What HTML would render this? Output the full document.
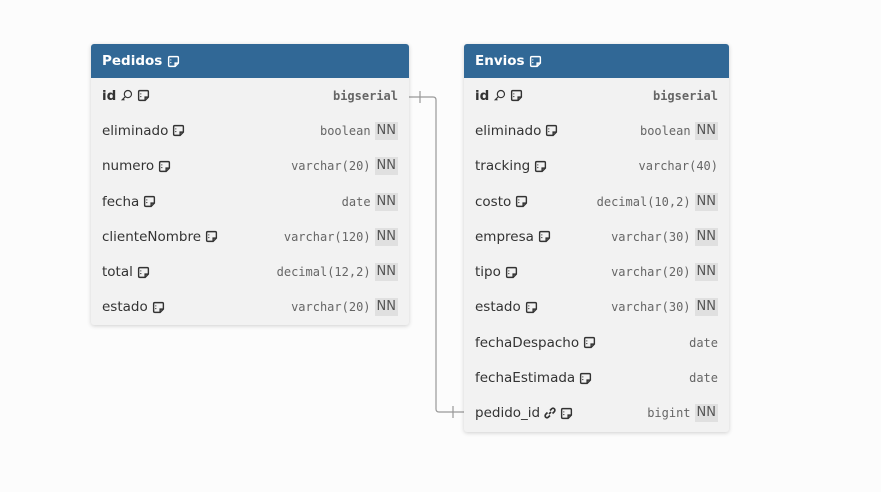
<!DOCTYPE html>
<html><head><meta charset="utf-8"><style>
*{margin:0;padding:0;box-sizing:border-box}
body{width:881px;height:492px;background:#fcfcfc;position:relative;overflow:hidden;font-family:"DejaVu Sans","Liberation Sans",sans-serif}
.card{position:absolute;background:#f2f2f2;border-radius:3px;box-shadow:0 1px 4px rgba(0,0,0,.18);overflow:hidden}
.hd{height:34px;background:#316896;color:#fff;font-weight:bold;font-size:13.5px;display:flex;align-items:center;padding-left:11px}
.row{height:35.3px;display:flex;align-items:center;padding:0 11px;font-size:13.5px;color:#333}
.nm{display:flex;align-items:center;gap:4px}
.ty{margin-left:auto;font-family:"DejaVu Sans Mono","Liberation Mono",monospace;font-size:12px;color:#666}
.nn{margin-left:4px;background:#e0e0e0;color:#555;font-size:13px;padding:0 2px;height:18px;line-height:18px}
b{font-weight:bold}
svg{display:block}
</style></head><body>
<svg width="881" height="492" style="position:absolute;left:0;top:0">
<path d="M409 97 H433 Q436 97 436 100 V409 Q436 412 439 412 H464" fill="none" stroke="#999" stroke-width="1.2"/>
<path d="M420 91 V103 M453 406 V418" stroke="#999" stroke-width="1.2"/>
</svg>
<svg width="0" height="0" style="position:absolute"><defs>
<symbol id="n" viewBox="0 0 12 12"><path d="M2.5 1.5 H9.5 Q10.5 1.5 10.5 2.5 V7.5 L7.5 10.5 H2.5 Q1.5 10.5 1.5 9.5 V2.5 Q1.5 1.5 2.5 1.5 Z M10.5 7.5 H7.5 V10.5" fill="none" stroke="#333" stroke-width="1.3"/><path d="M3.5 4v1M3.5 6.5v1" stroke="#333" stroke-width="1"/></symbol>
<symbol id="w" viewBox="0 0 12 12"><path d="M2.5 1.5 H9.5 Q10.5 1.5 10.5 2.5 V7.5 L7.5 10.5 H2.5 Q1.5 10.5 1.5 9.5 V2.5 Q1.5 1.5 2.5 1.5 Z M10.5 7.5 H7.5 V10.5" fill="none" stroke="#fff" stroke-width="1.3"/><path d="M3.5 4v1M3.5 6.5v1" stroke="#fff" stroke-width="1"/></symbol>
<symbol id="k" viewBox="0 0 12 12"><circle cx="7.3" cy="4.7" r="3.3" fill="none" stroke="#333" stroke-width="1.1"/><path d="M5 7 L1.5 10.5 M2.8 9.2 L4 10.4" fill="none" stroke="#333" stroke-width="1.1"/></symbol>
<symbol id="l" viewBox="0 0 12 12"><path d="M5 7 L7 5 M6 3.5 L7.5 2 Q9 0.5 10.5 2 Q11.5 3.5 10 5 L8.5 6.5 M6 8.5 L4.5 10 Q3 11.5 1.5 10 Q0.5 8.5 2 7 L3.5 5.5" fill="none" stroke="#333" stroke-width="1.6"/></symbol>
</defs></svg>

<div class="card" style="left:91px;top:44px;width:318px;height:281px">
<div class="hd">Pedidos&nbsp;<svg width="13" height="13"><use href="#w"/></svg></div>
<div class="row"><span class="nm"><b>id</b><svg width="13" height="13"><use href="#k"/></svg><svg width="13" height="13"><use href="#n"/></svg></span><span class="ty" style="font-weight:bold">bigserial</span></div>
<div class="row"><span class="nm">eliminado<svg width="13" height="13"><use href="#n"/></svg></span><span class="ty">boolean</span><span class="nn">NN</span></div>
<div class="row"><span class="nm">numero<svg width="13" height="13"><use href="#n"/></svg></span><span class="ty">varchar(20)</span><span class="nn">NN</span></div>
<div class="row"><span class="nm">fecha<svg width="13" height="13"><use href="#n"/></svg></span><span class="ty">date</span><span class="nn">NN</span></div>
<div class="row"><span class="nm">clienteNombre<svg width="13" height="13"><use href="#n"/></svg></span><span class="ty">varchar(120)</span><span class="nn">NN</span></div>
<div class="row"><span class="nm">total<svg width="13" height="13"><use href="#n"/></svg></span><span class="ty">decimal(12,2)</span><span class="nn">NN</span></div>
<div class="row"><span class="nm">estado<svg width="13" height="13"><use href="#n"/></svg></span><span class="ty">varchar(20)</span><span class="nn">NN</span></div>
</div>

<div class="card" style="left:464px;top:44px;width:265px;height:388px">
<div class="hd">Envios&nbsp;<svg width="13" height="13"><use href="#w"/></svg></div>
<div class="row"><span class="nm"><b>id</b><svg width="13" height="13"><use href="#k"/></svg><svg width="13" height="13"><use href="#n"/></svg></span><span class="ty" style="font-weight:bold">bigserial</span></div>
<div class="row"><span class="nm">eliminado<svg width="13" height="13"><use href="#n"/></svg></span><span class="ty">boolean</span><span class="nn">NN</span></div>
<div class="row"><span class="nm">tracking<svg width="13" height="13"><use href="#n"/></svg></span><span class="ty">varchar(40)</span></div>
<div class="row"><span class="nm">costo<svg width="13" height="13"><use href="#n"/></svg></span><span class="ty">decimal(10,2)</span><span class="nn">NN</span></div>
<div class="row"><span class="nm">empresa<svg width="13" height="13"><use href="#n"/></svg></span><span class="ty">varchar(30)</span><span class="nn">NN</span></div>
<div class="row"><span class="nm">tipo<svg width="13" height="13"><use href="#n"/></svg></span><span class="ty">varchar(20)</span><span class="nn">NN</span></div>
<div class="row"><span class="nm">estado<svg width="13" height="13"><use href="#n"/></svg></span><span class="ty">varchar(30)</span><span class="nn">NN</span></div>
<div class="row"><span class="nm">fechaDespacho<svg width="13" height="13"><use href="#n"/></svg></span><span class="ty">date</span></div>
<div class="row"><span class="nm">fechaEstimada<svg width="13" height="13"><use href="#n"/></svg></span><span class="ty">date</span></div>
<div class="row"><span class="nm">pedido_id<svg width="12" height="12"><use href="#l"/></svg><svg width="13" height="13"><use href="#n"/></svg></span><span class="ty">bigint</span><span class="nn">NN</span></div>
</div>
</body></html>
